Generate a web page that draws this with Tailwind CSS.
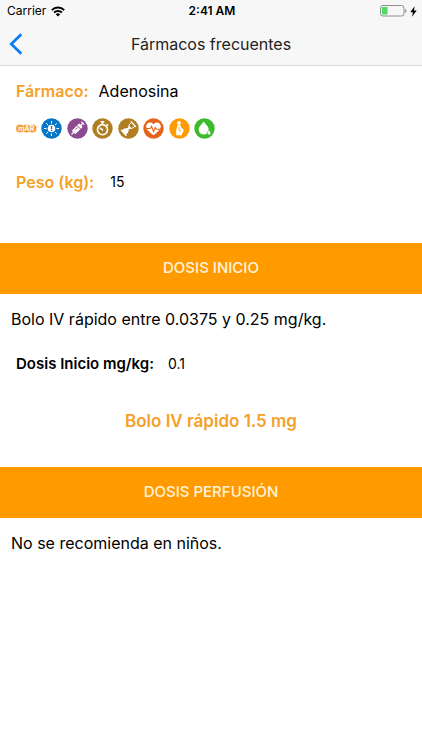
<!DOCTYPE html>
<html lang="es">
<head>
    <meta charset="UTF-8">
    <meta name="viewport" content="width=device-width, initial-scale=1.0">
    <title>Fármacos frecuentes</title>
    <script src="https://cdn.jsdelivr.net/npm/@tailwindcss/browser@4"></script>
</head>
<body class="bg-white text-black font-['Inter','Liberation_Sans',sans-serif]">
    <div class="min-h-screen">
        <!-- Header -->
        <header class="bg-[#f7f7f7] border-b border-[#d8d8d8]">
            <div class="grid grid-cols-3 items-center h-[22px] pl-[7px] pr-[5px] text-xs">
                <div class="flex items-center gap-[5px]">
                    <span>Carrier</span>
                    <svg class="w-[14px] h-[11px]" viewBox="0 0 14 11" fill="none" stroke="#000" stroke-width="2">
                        <path d="M0.8 4.1a8.8 8.8 0 0 1 12.4 0"/>
                        <path d="M3.1 6.5a5.6 5.6 0 0 1 7.8 0"/>
                        <path d="M7 10.6 4.8 8.3a3.2 3.2 0 0 1 4.4 0z" fill="#000" stroke="none"/>
                    </svg>
                </div>
                <span class="text-center font-semibold">2:41 AM</span>
                <div class="flex items-center justify-end gap-[3px]">
                    <svg class="w-[27px] h-3" viewBox="0 0 27 12">
                        <rect x="0.5" y="0.5" width="23.5" height="10.5" rx="2.5" fill="none" stroke="#8e8e8e"/>
                        <rect x="2" y="2" width="5.5" height="7.5" rx="0.5" fill="#4cd964"/>
                        <path d="M25.2 4v4q1.3-.6 1.3-2t-1.3-2z" fill="#8e8e8e"/>
                    </svg>
                    <svg class="w-[7px] h-[11px]" viewBox="0 0 7 11">
                        <path d="M4.6 0.3 0.3 6.2h2.6L2 10.7l4.7-6.3H4z" fill="#000"/>
                    </svg>
                </div>
            </div>
            <div class="grid grid-cols-[40px_1fr_40px] items-center h-[43px]">
                <button type="button" aria-label="Volver" class="h-full pl-[9px]">
                    <svg class="w-[14px] h-[22px]" viewBox="0 0 14 22" fill="none" stroke="#0a7cf5" stroke-width="2.8">
                        <path d="M12.3 1.3 2.3 11l10 9.7"/>
                    </svg>
                </button>
                <h1 class="text-center text-base text-[#222]">Fármacos frecuentes</h1>
            </div>
        </header>

        <main>
            <!-- Drug -->
            <section class="px-4 pt-[13px]">
                <div class="flex gap-[10px] text-base leading-6">
                    <span class="font-semibold text-[#f5a029]">Fármaco:</span>
                    <span>Adenosina</span>
                </div>

                <div class="flex items-center justify-between w-[199px] mt-[15px]">
                    <svg class="w-[21px] h-[21px]" viewBox="0 0 21 21">
                        <g fill="#f5a338">
                            <circle cx="4" cy="10.500" r="4"/>
                            <circle cx="10.500" cy="10.500" r="4"/>
                            <circle cx="16.500" cy="10.500" r="4"/>
                        </g>
                        <text x="10.300" y="13" text-anchor="middle" font-size="7" font-weight="600" fill="#fff">mAR</text>
                    </svg>
                    <svg class="w-[21px] h-[21px]" viewBox="0 0 21 21">
                        <circle cx="10.5" cy="10.5" r="10.2" fill="#0876c6"/>
                        <circle cx="10.5" cy="10.5" r="3.8" fill="#fff"/>
                        <path d="M10.5 3v2.5M10.5 15.5V18M3 10.5h2.5M15.5 10.5H18M5.2 5.2 7 7M14 14l1.8 1.8M15.8 5.2 14 7M7 14l-1.8 1.8" stroke="#fff"/>
                        <path d="M10.5 8v3M10.5 11.7v1.2" stroke="#0876c6" stroke-width="1.3"/>
                    </svg>
                    <svg class="w-[21px] h-[21px]" viewBox="0 0 21 21">
                        <circle cx="10.5" cy="10.5" r="10.2" fill="#8e4a91"/>
                        <g transform="rotate(-45 10.5 10.5)">
                            <path d="M2 10.5H6M15 10.5h3.5M5.5 8v5M18 8.5v4" stroke="#fff" stroke-width="1.2"/>
                            <rect x="6" y="8" width="9.5" height="5" rx="1" fill="#fff"/>
                            <path d="M8 9.600h3M12.3 8v5" stroke="#8e4a91" stroke-width="0.9"/>
                        </g>
                    </svg>
                    <svg class="w-[21px] h-[21px]" viewBox="0 0 21 21">
                        <circle cx="10.5" cy="10.5" r="10.2" fill="#b07e20"/>
                        <circle cx="10.5" cy="11.7" r="5" fill="none" stroke="#fff" stroke-width="1.7"/>
                        <path d="M8.7 3.9h3.6M10.5 4v2.5M14.6 6.3l1.5 1.4" stroke="#fff" stroke-width="1.6"/>
                        <path d="m8 9.8 3 2.6" stroke="#fff" stroke-width="1.6"/>
                    </svg>
                    <svg class="w-[21px] h-[21px]" viewBox="0 0 21 21">
                        <circle cx="10.5" cy="10.5" r="10.2" fill="#b07e20"/>
                        <g transform="rotate(48 10.5 10.5)">
                            <path d="M7.8 4.200q-.2 3.800 2.300 6.300h.8q2.500-2.500 2.300-6.300z" fill="none" stroke="#fff" stroke-width="0.900"/>
                            <path d="M9 8h3l-1.200 2.500h-.6z" fill="#fff"/>
                            <path d="M10 10.300h1q2.800 2.400 2.800 6.700H7.200q0-4.300 2.800-6.700z" fill="#fff"/>
                            <path d="M6.800 3.900h7.400M6.500 17h8" stroke="#fff" stroke-width="1.300"/>
                        </g>
                    </svg>
                    <svg class="w-[21px] h-[21px]" viewBox="0 0 21 21">
                        <circle cx="10.5" cy="10.5" r="10.2" fill="#e5641b"/>
                        <path d="M10.5 17.2C6 13.7 3.200 11.300 3.200 8.300c0-4 5.200-5.200 7.300-1.900 2.100-3.300 7.300-2.100 7.300 1.900 0 3-2.800 5.400-7.300 8.900z" fill="#fff"/>
                        <path d="M3.500 10.500h3.700l1.300-2.200 2 5.200 1.800-4 1 1.800h4" fill="none" stroke="#e5641b" stroke-width="1.100"/>
                    </svg>
                    <svg class="w-[21px] h-[21px]" viewBox="0 0 21 21">
                        <circle cx="10.5" cy="10.5" r="10.2" fill="#ff9b05"/>
                        <circle cx="10" cy="5" r="1.900" fill="#fff"/>
                        <path d="M8.500 7.300h3l.6 2.200c2.600.9 3.200 3.300 1.800 5l-.9.900v1.900H7.200V12z" fill="#fff"/>
                        <path d="M10 9v3.300l2.200.9" fill="none" stroke="#ff9b05" stroke-width="0.800"/>
                    </svg>
                    <svg class="w-[21px] h-[21px]" viewBox="0 0 21 21">
                        <circle cx="10.5" cy="10.5" r="10.2" fill="#3dbb2e"/>
                        <path d="M9.700 3.500c2 3 5 5.300 5 8.100a5 5 0 0 1-10 0c0-2.800 3-5.100 5-8.100z" fill="#fff"/>
                        <path d="M15 11.800c1 1.500 1.800 2.300 1.800 3.400a1.800 1.800 0 0 1-3.600 0c0-1.100.8-1.900 1.800-3.400z" fill="#fff" stroke="#3dbb2e" stroke-width="0.700"/>
                    </svg>
                </div>

                <div class="flex items-center gap-4 h-6 mt-[31px]">
                    <label for="peso" class="text-base font-semibold text-[#f5a029]">Peso (kg):</label>
                    <input type="text" id="peso" value="15" inputmode="decimal" class="w-24 text-sm outline-none">
                </div>
            </section>

            <!-- Starting dose -->
            <section class="mt-[49px]">
                <h2 class="bg-[#ff9b00] h-[51px] flex items-center justify-center text-[15px] font-medium text-[#fff3dc]">DOSIS INICIO</h2>
                <p class="px-[11px] mt-[13px] text-base leading-6">Bolo IV rápido entre 0.0375 y 0.25 mg/kg.</p>
                <div class="flex items-center gap-[14px] h-6 px-4 mt-[21px]">
                    <label for="dosis" class="text-[15px] font-semibold">Dosis Inicio mg/kg:</label>
                    <input type="text" id="dosis" value="0.1" inputmode="decimal" class="w-24 text-sm outline-none">
                </div>
                <p class="mt-[33px] text-center text-[17px] leading-6 font-semibold text-[#f5a029]">Bolo IV rápido 1.5 mg</p>
            </section>

            <!-- Perfusion dose -->
            <section class="mt-[34px]">
                <h2 class="bg-[#ff9b00] h-[51px] flex items-center justify-center text-[15px] font-medium text-[#fff3dc]">DOSIS PERFUSIÓN</h2>
                <p class="px-[11px] mt-[13px] text-base leading-6">No se recomienda en niños.</p>
            </section>
        </main>
    </div>
</body>
</html>
